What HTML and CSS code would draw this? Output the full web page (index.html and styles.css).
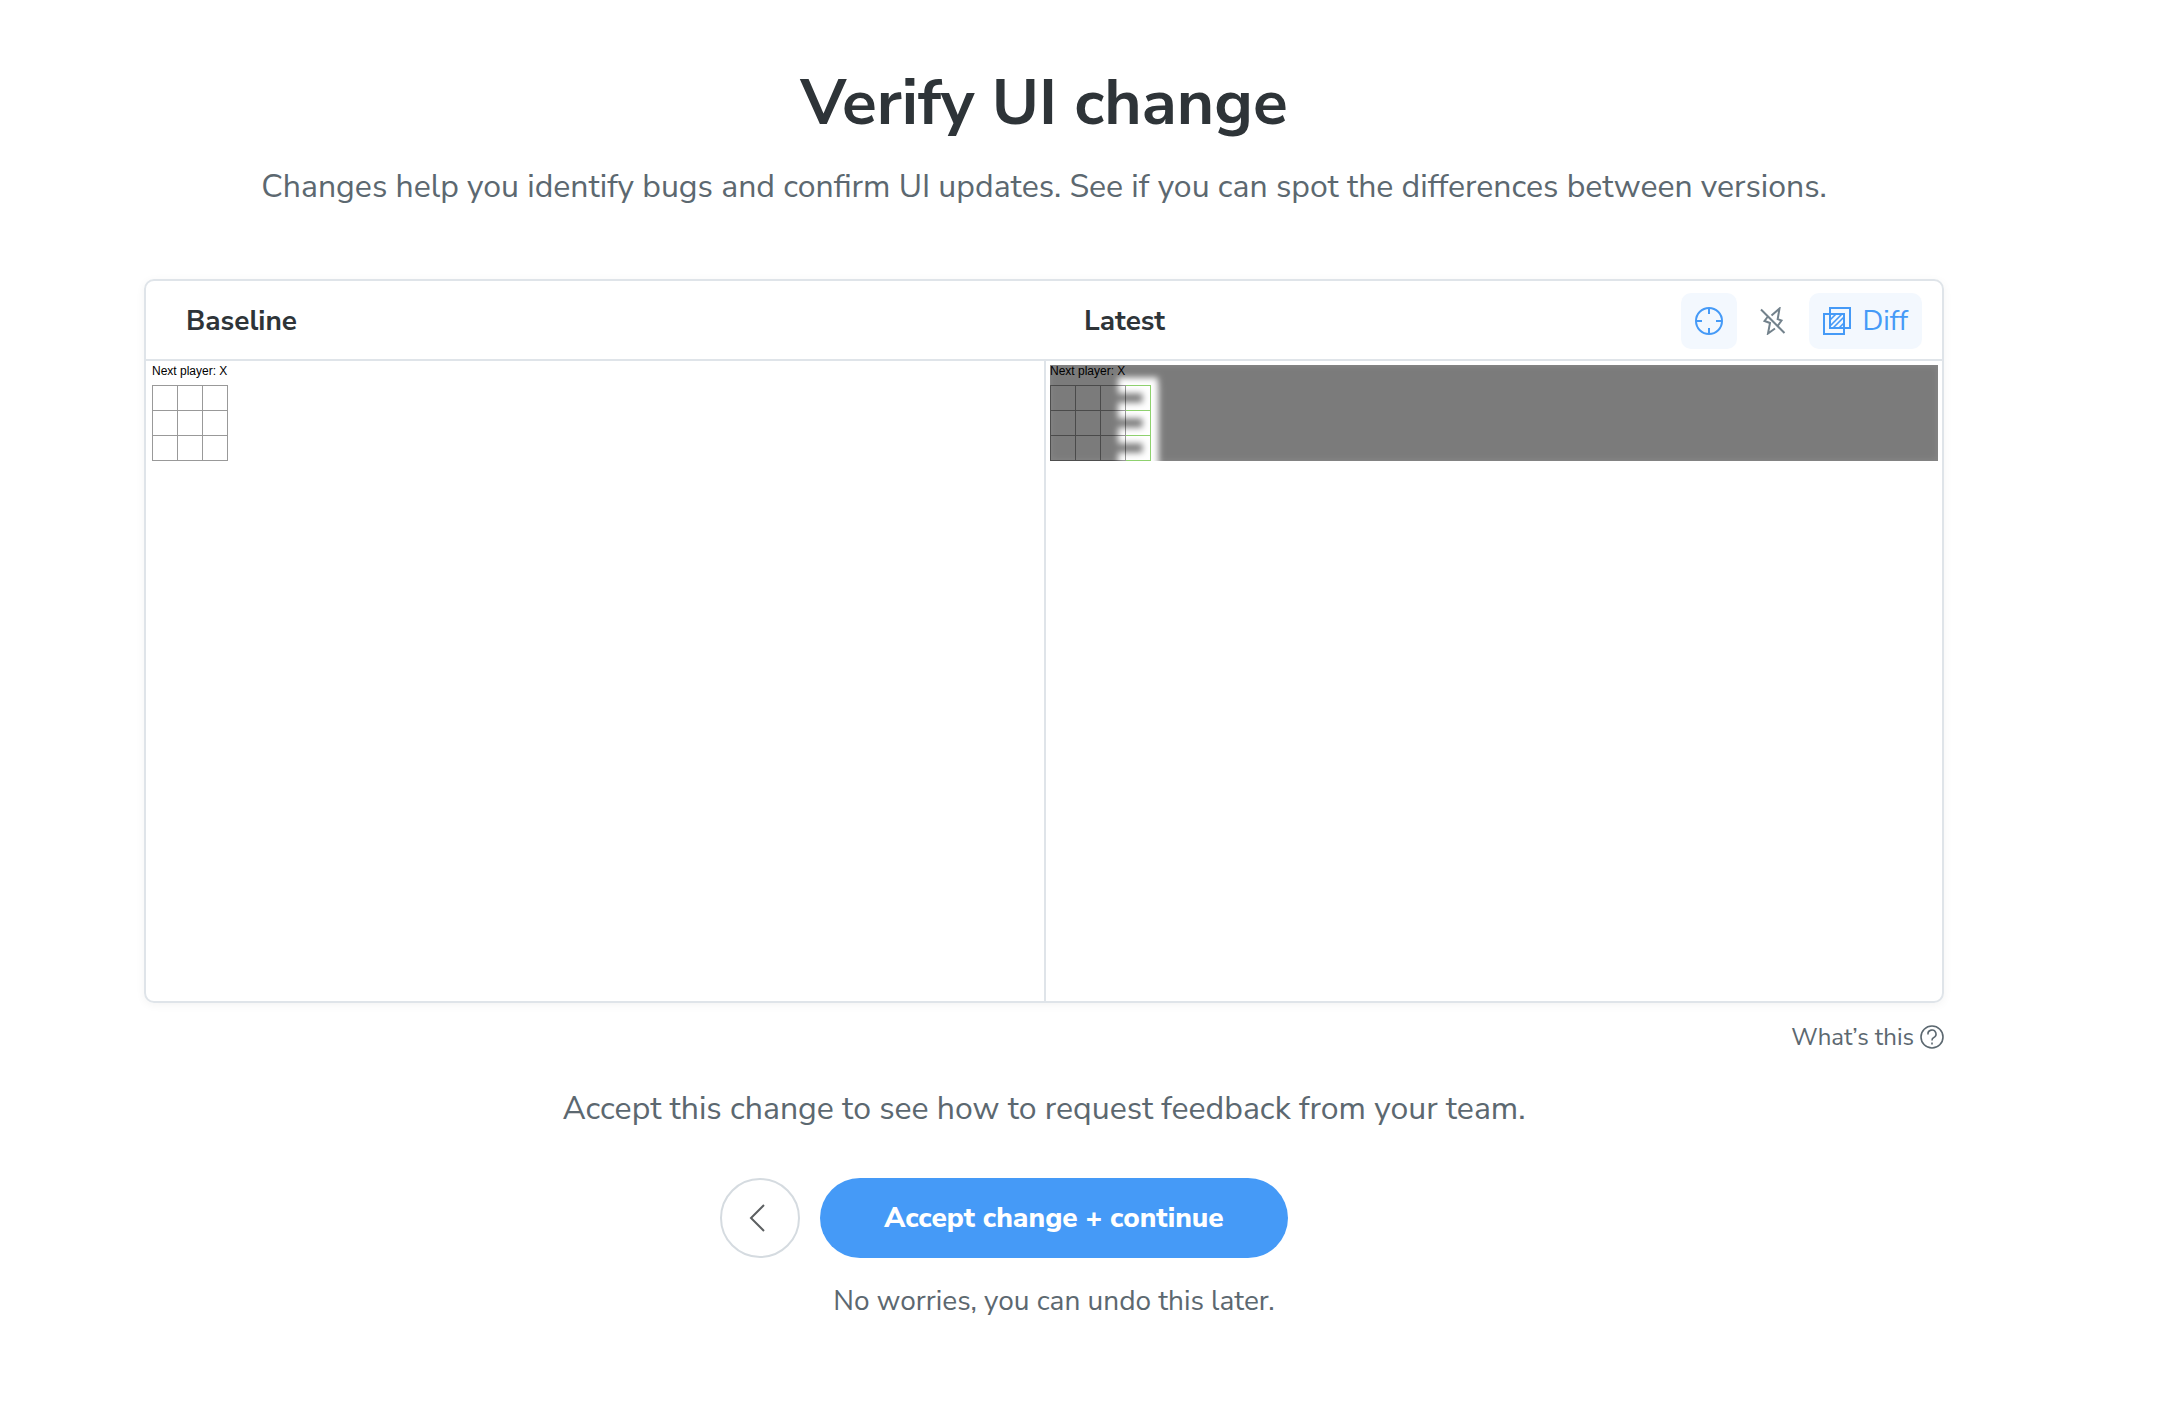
FILE: index.html
```html
<!DOCTYPE html>
<html lang="en">
<head>
<meta charset="utf-8">
<meta name="viewport" content="width=device-width, initial-scale=1">
<title>Verify UI change</title>
<link rel="stylesheet" href="styles.css">
</head>
<body>
<main class="page">
  <header class="intro">
    <h1 class="title">Verify UI change</h1>
    <p class="lead">Changes help you identify bugs and confirm UI updates. See if you can spot the differences between versions.</p>
  </header>

  <section class="compare" aria-label="Snapshot comparison">
    <div class="compare-head">
      <h2 class="label">Baseline</h2>
      <div class="latest-head">
        <h2 class="label">Latest</h2>
        <div class="tools">
          <button class="tool tool-on" type="button" aria-label="Spotlight">
            <svg class="icon" viewBox="0 0 28 28" aria-hidden="true"><circle cx="14" cy="14" r="13"/><path d="M14 1v6M14 21v6M1 14h6M21 14h6"/></svg>
          </button>
          <button class="tool" type="button" aria-label="Strobe">
            <svg class="icon" viewBox="0 0 28 28" aria-hidden="true"><path d="M2 2.500L25.500 26M12.500 8.500L20.500 1.500 18.700 12.200 22.500 13.500 19 18.500M16 21.500L9 26.500 11 16 5.500 14 8.500 10"/></svg>
          </button>
          <button class="tool tool-on" type="button">
            <svg class="icon" viewBox="0 0 28 28" aria-hidden="true"><path d="M7 1h20v20H7zM7 7H1v20h20v-6M7 7h14v14"/><path class="hatch" d="M7 13l6-6M7 19L19 7M10 21L21 10M16 21l5-5"/></svg>
            Diff
          </button>
        </div>
      </div>
    </div>
    <div class="compare-body">
      <div class="pane">
        <svg class="snapshot" viewBox="0 0 888 96" preserveAspectRatio="xMinYMin meet" role="img" aria-label="Baseline snapshot">
          <text class="shot-text" x="0" y="10">Next player: X</text>
          <path class="shot-line" d="M0 20.500h76M0 45.500h76M0 70.500h76M0 95.500h76M.5 20v76M25.500 20v76M50.500 20v76M75.500 20v76"/>
        </svg>
      </div>
      <div class="pane pane-latest">
        <svg class="snapshot" viewBox="0 0 888 96" preserveAspectRatio="xMinYMin meet" role="img" aria-label="Latest snapshot with differences">
          <defs>
            <filter id="soft" filterUnits="userSpaceOnUse" x="-20" y="-20" width="928" height="136"><feGaussianBlur stdDeviation="3"/></filter>
            <mask id="spot" maskUnits="userSpaceOnUse" x="0" y="0" width="888" height="96">
              <rect width="888" height="96" fill="#fff"/>
              <path class="spot-cut" filter="url(#soft)" d="M68 20.500h40M68 45.500h40M68 70.500h40M68 95.500h40M100.500 20v86"/>
            </mask>
          </defs>
          <text class="shot-text" x="0" y="10">Next player: X</text>
          <path class="shot-line" d="M0 20.500h76M0 45.500h76M0 70.500h76M0 95.500h76M.5 20v76M25.500 20v76M50.500 20v76M75.500 20v76"/>
          <path class="shot-new" d="M76 20.500h25M76 45.500h25M76 70.500h25M76 95.500h25M100.500 20v76"/>
          <g mask="url(#spot)">
            <rect class="shade" width="888" height="96"/>
            <rect class="shade-rim" x="1" y="1" width="886" height="94" filter="url(#soft)"/>
          </g>
        </svg>
      </div>
    </div>
  </section>

  <a class="help" href="#help">What’s this
    <svg class="help-icon" viewBox="0 0 24 24" aria-hidden="true"><circle cx="12" cy="12" r="11"/><path d="M8 9.500a4 4 0 1 1 5.500 3.200C12.300 13.200 12 13.800 12 15.500M12 17.500v2"/></svg>
  </a>

  <p class="prompt">Accept this change to see how to request feedback from your team.</p>

  <div class="actions">
    <button class="back" type="button" aria-label="Back">
      <svg class="back-icon" viewBox="0 0 28 28" aria-hidden="true"><path d="M18 1L5 14l13 13"/></svg>
    </button>
    <div class="accept-group">
      <button class="accept" type="button">Accept change + continue</button>
      <p class="note">No worries, you can undo this later.</p>
    </div>
  </div>
</main>
</body>
</html>
```
FILE: styles.css
```css
* { box-sizing: border-box; }

body {
  margin: 0;
  padding: 63px 76px 64px 0;
  background: #fff;
  color: #2e3438;
  font-family: "Nunito Sans", Lato, sans-serif;
}

h1, h2, p { margin: 0; }

button {
  font: inherit;
  border: 0;
  background: none;
  cursor: pointer;
}

.page {
  display: flex;
  flex-direction: column;
  width: calc(100% - 288px);
  max-width: 1800px;
  margin: 0 auto;
}

.intro { text-align: center; }

.title {
  font-size: 64px;
  line-height: 80px;
  font-weight: 700;
}

.lead, .prompt {
  color: #5c6870;
  font-size: 32px;
  line-height: 48px;
}

.lead { margin-top: 20px; }

.compare {
  margin-top: 68px;
  border: 2px solid #dfe4e9;
  border-radius: 10px;
  box-shadow: 0 2px 10px rgba(0, 0, 0, 0.05);
}

.compare-head {
  display: grid;
  grid-template-columns: 1fr 1fr;
  align-items: center;
  height: 80px;
  padding-top: 2px;
  border-bottom: 2px solid #dfe4e9;
}

.label {
  padding-left: 40px;
  font-size: 28px;
  line-height: 40px;
  font-weight: 700;
}

.latest-head {
  display: flex;
  align-items: center;
  justify-content: space-between;
  padding-right: 20px;
}

.tools {
  display: flex;
  gap: 8px;
}

.tool {
  display: flex;
  align-items: center;
  gap: 12px;
  height: 56px;
  padding: 0 14px;
  border-radius: 10px;
  color: #73828c;
  font-size: 28px;
}

.tool-on {
  background: #f3f8fe;
  color: #459af7;
}

.icon {
  width: 28px;
  height: 28px;
  fill: none;
  stroke: currentColor;
  stroke-width: 2;
}

.hatch { stroke-width: 1.6; }

.compare-body {
  display: grid;
  grid-template-columns: 1fr 1fr;
  min-height: 640px;
}

.pane { padding: 4px 4px 4px 6px; }

.pane-latest {
  padding-left: 4px;
  border-left: 2px solid #dfe4e9;
}

.snapshot {
  display: block;
  width: 100%;
}

.shot-text {
  font: 12px "Liberation Sans", Arial, sans-serif;
}

.shot-line { fill: none; stroke: #999; }
.shot-new { fill: none; stroke: #8fd16f; }
.shade { fill: #000; fill-opacity: 0.47; }
.shade-rim { fill: #000; fill-opacity: 0.09; }
.spot-cut {
  fill: none;
  stroke: #000;
  stroke-width: 16;
  stroke-linejoin: round;
}

.help {
  display: flex;
  align-items: center;
  align-self: flex-end;
  gap: 6px;
  margin-top: 18px;
  color: #5c6870;
  font-size: 24px;
  line-height: 32px;
  text-decoration: none;
}

.help-icon {
  width: 24px;
  height: 24px;
  fill: none;
  stroke: currentColor;
  stroke-width: 1.6;
}

.prompt {
  margin-top: 32px;
  text-align: center;
}

.actions {
  display: flex;
  justify-content: center;
  gap: 20px;
  margin-top: 45px;
  padding-right: 80px;
}

.back {
  display: grid;
  place-items: center;
  width: 80px;
  height: 80px;
  border: 2px solid #d5dbe0;
  border-radius: 40px;
  color: #5c5f61;
}

.back-icon {
  width: 28px;
  height: 28px;
  fill: none;
  stroke: currentColor;
  stroke-width: 2;
}

.accept-group { text-align: center; }

.accept {
  height: 80px;
  padding: 0 64px;
  border-radius: 40px;
  background: #459af7;
  color: #fff;
  font-size: 28px;
  font-weight: 800;
}

.note {
  margin-top: 23px;
  color: #5c6870;
  font-size: 28px;
  line-height: 40px;
}
```
